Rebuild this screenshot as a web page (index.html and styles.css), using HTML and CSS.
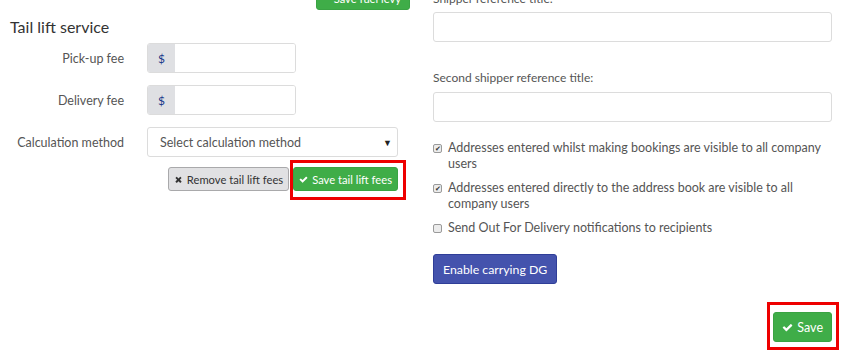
FILE: index.html
```html
<!DOCTYPE html>
<html lang="en">

<head>
    <meta charset="utf-8">
    <title>Settings</title>
    <link rel="stylesheet" href="styles.css">
</head>

<body>
    <div class="page">

        <!-- venstre kolonne -->
        <section class="venstre">
            <div class="top-knap">
                <button class="btn gron">
                    <svg class="ikon" viewBox="0 0 1792 1792"><path d="M1671 566q0 40-28 68l-724 724-136 136q-28 28-68 28t-68-28l-136-136-362-362q-28-28-28-68t28-68l136-136q28-28 68-28t68 28l294 295 656-657q28-28 68-28t68 28l136 136q28 28 28 68z"/></svg>
                    Save fuel levy
                </button>
            </div>

            <h3>Tail lift service</h3>

            <div class="felt">
                <label>Pick-up fee</label>
                <div class="input-gruppe">
                    <span class="addon">$</span>
                    <input type="text">
                </div>
            </div>

            <div class="felt">
                <label>Delivery fee</label>
                <div class="input-gruppe">
                    <span class="addon">$</span>
                    <input type="text">
                </div>
            </div>

            <div class="felt">
                <label>Calculation method</label>
                <div class="vaelg">
                    <span>Select calculation method</span>
                    <span class="pil">&#9660;</span>
                </div>
            </div>

            <div class="knapper">
                <button class="btn graa">
                    <svg class="ikon" viewBox="0 0 1408 1792"><path d="M1298 1322q0 40-28 68l-136 136q-28 28-68 28t-68-28l-294-294-294 294q-28 28-68 28t-68-28l-136-136q-28-28-28-68t28-68l294-294-294-294q-28-28-28-68t28-68l136-136q28-28 68-28t68 28l294 294 294-294q28-28 68-28t68 28l136 136q28 28 28 68t-28 68l-294 294 294 294q28 28 28 68z"/></svg>
                    Remove tail lift fees
                </button>
                <button class="btn gron markeret m1">
                    <svg class="ikon" viewBox="0 0 1792 1792"><path d="M1671 566q0 40-28 68l-724 724-136 136q-28 28-68 28t-68-28l-136-136-362-362q-28-28-28-68t28-68l136-136q28-28 68-28t68 28l294 295 656-657q28-28 68-28t68 28l136 136q28 28 28 68z"/></svg>
                    Save tail lift fees
                </button>
            </div>
        </section>

        <!-- hoejre kolonne -->
        <section class="hoejre">
            <label class="titel">Shipper reference title:</label>
            <input type="text" class="felt-input">

            <label class="titel anden">Second shipper reference title:</label>
            <input type="text" class="felt-input">

            <div class="tjek-liste">
                <div class="tjek">
                    <span class="boks valgt">&#10004;</span>
                    <p>Addresses entered whilst making bookings are visible to all company users</p>
                </div>
                <div class="tjek">
                    <span class="boks valgt">&#10004;</span>
                    <p>Addresses entered directly to the address book are visible to all company users</p>
                </div>
                <div class="tjek">
                    <span class="boks"></span>
                    <p>Send Out For Delivery notifications to recipients</p>
                </div>
            </div>

            <button class="btn blaa">Enable carrying DG</button>

            <div class="gem">
                <button class="btn gron stor markeret m2">
                    <svg class="ikon" viewBox="0 0 1792 1792"><path d="M1671 566q0 40-28 68l-724 724-136 136q-28 28-68 28t-68-28l-136-136-362-362q-28-28-28-68t28-68l136-136q28-28 68-28t68 28l294 295 656-657q28-28 68-28t68 28l136 136q28 28 28 68z"/></svg>
                    Save
                </button>
            </div>
        </section>

    </div>
</body>

</html>
```

FILE: styles.css
```css
* {
    margin: 0;
    padding: 0;
    box-sizing: border-box;
}

body {
    font-family: Lato, "Open Sans", sans-serif;
    font-size: 12.5px;
    color: #555;
    background: white;
}

.page {
    display: grid;
    grid-template-columns: 398px 399px;
    column-gap: 35px;
    padding-bottom: 13px;
}

/* Knapper */
.btn {
    font-family: inherit;
    font-size: 11.2px;
    border: 1px solid transparent;
    border-radius: 3px;
    padding: 0 5px;
    height: 24px;
    display: inline-flex;
    align-items: center;
    gap: 4px;
    color: white;
    white-space: nowrap;
    position: relative;
}

.ikon {
    width: 9px;
    height: 9px;
    fill: currentColor;
}

.gron {
    background-color: #3fad48;
    border-color: #3aa343;
}

.graa {
    background-color: #e1e1e3;
    border-color: #a9a9ab;
    color: #333;
}

.blaa {
    background-color: #4453ad;
    border-color: #2f3e98;
    height: 30px;
    padding: 0 9px;
    font-size: 12.3px;
    margin-top: 10px;
}

.stor {
    height: 30px;
    padding: 0 8px;
    font-size: 12.5px;
}

.stor .ikon {
    width: 11px;
    height: 11px;
}

/* roede markeringer */
.markeret::after {
    content: "";
    position: absolute;
    border: 3px solid #ee0000;
}

.m1::after {
    top: -8px;
    left: -4px;
    right: -9px;
    bottom: -10px;
}

.m2::after {
    top: -11px;
    left: -7px;
    right: -8px;
    bottom: -9px;
}

/* venstre */
.venstre {
    padding-left: 10px;
}

.top-knap {
    display: flex;
    justify-content: flex-end;
    margin-top: -14px;
    margin-right: -12px;
}

.top-knap .btn {
    width: 94px;
    padding: 0 8px;
}

h3 {
    font-weight: normal;
    font-size: 16px;
    color: #333;
    margin-top: 7px;
    margin-bottom: 7px;
}

.felt {
    display: grid;
    grid-template-columns: 114px 1fr;
    column-gap: 23px;
    align-items: center;
    margin-bottom: 12px;
}

.felt label {
    text-align: right;
}

.input-gruppe {
    display: flex;
    width: 149px;
    height: 30px;
    border: 1px solid #dcdcdc;
    border-radius: 3px;
    overflow: hidden;
}

.addon {
    width: 27px;
    background-color: #dfe0e3;
    color: #1a3a8a;
    display: flex;
    align-items: center;
    justify-content: center;
    font-size: 12px;
}

.input-gruppe input {
    border: none;
    flex: 1;
    min-width: 0;
}

.vaelg {
    height: 30px;
    border: 1px solid #dcdcdc;
    border-radius: 3px;
    display: flex;
    align-items: center;
    justify-content: space-between;
    padding: 0 5px 0 12px;
}

.pil {
    font-size: 9px;
    color: #222;
}

.knapper {
    display: flex;
    justify-content: flex-end;
    gap: 4px;
    margin-top: -2px;
}

/* hoejre */
.hoejre {
    margin-top: -10px;
}

.titel {
    display: block;
    font-size: 12px;
    line-height: 17px;
    margin-bottom: 5px;
}

.anden {
    margin-top: 27px;
    margin-bottom: 6px;
}

.felt-input {
    display: block;
    width: 100%;
    height: 30px;
    border: 1px solid #dcdcdc;
    border-radius: 3px;
}

.tjek-liste {
    margin-top: 18px;
}

.tjek {
    display: flex;
    gap: 6px;
    margin-bottom: 8px;
}

.tjek p {
    line-height: 16px;
    flex: 1;
}

.boks {
    width: 9px;
    height: 9px;
    margin-top: 4px;
    border: 1px solid #9a9a9a;
    border-radius: 2px;
    background: #ececec;
    font-size: 7px;
    line-height: 7px;
    color: #333;
    text-align: center;
}

.gem {
    display: flex;
    justify-content: flex-end;
    margin-top: 28px;
}
```
